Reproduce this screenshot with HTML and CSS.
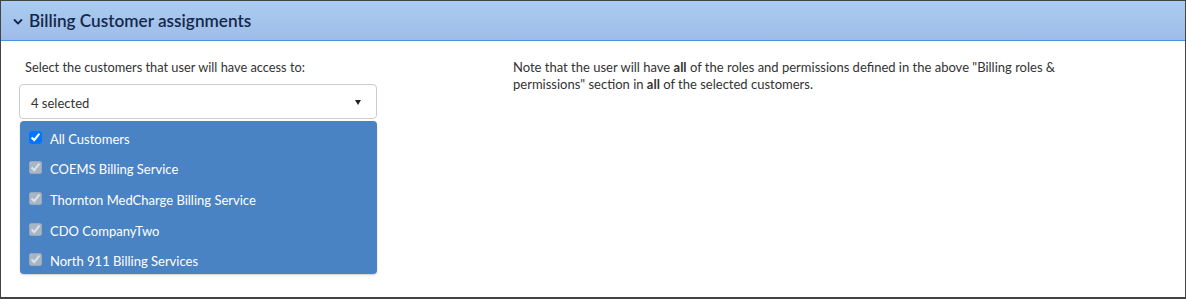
FILE: index.html
```html
<!DOCTYPE html>
<html lang="en">
<head>
    <meta charset="UTF-8">
    <title>Billing Customer assignments</title>
    <link rel="stylesheet" href="styles.css">
</head>
<body>
    <section class="panel">
        <header class="panel-heading">
            <svg class="chevron" width="10" height="8" viewBox="0 0 10 8">
                <path d="M1.5 2 L5 5.5 L8.5 2" fill="none" stroke="currentColor" stroke-width="1.8" stroke-linecap="round" stroke-linejoin="round"/>
            </svg>
            <h2 class="panel-title">Billing Customer assignments</h2>
        </header>

        <div class="panel-body">
            <div class="customer-col">
                <label class="field-label">Select the customers that user will have access to:</label>
                <div class="multiselect">
                    <div class="multiselect-toggle">
                        <span>4 selected</span>
                        <span class="caret"></span>
                    </div>
                    <ul class="multiselect-menu">
                        <li><input type="checkbox" checked> All Customers</li>
                        <li><input type="checkbox" checked disabled> COEMS Billing Service</li>
                        <li><input type="checkbox" checked disabled> Thornton MedCharge Billing Service</li>
                        <li><input type="checkbox" checked disabled> CDO CompanyTwo</li>
                        <li><input type="checkbox" checked disabled> North 911 Billing Services</li>
                    </ul>
                </div>
            </div>
            <p class="note">Note that the user will have <b>all</b> of the roles and permissions defined in the above "Billing roles &amp; permissions" section in <b>all</b> of the selected customers.</p>
        </div>
    </section>
</body>
</html>
```

FILE: styles.css
```css
* {
    margin: 0;
    padding: 0;
    box-sizing: border-box;
}

body {
    font-family: 'Lato', 'Open Sans', sans-serif;
    font-size: 13px;
    color: #333;
    background: #fff;
}

.panel {
    width: 1186px;
    height: 299px;
    border: 1px solid #444;
    border-bottom-width: 2px;
}

.panel-heading {
    height: 40px;
    display: flex;
    align-items: center;
    gap: 6px;
    padding-left: 12px;
    background: linear-gradient(to bottom, #aacdf0, #9fbce8);
    border-bottom: 1px solid #4a90dc;
    color: #15284b;
}

.chevron {
    margin-top: 3px;
}

.panel-title {
    font-size: 17.2px;
    font-weight: 600;
}

.panel-body {
    display: grid;
    grid-template-columns: 358px 560px;
    column-gap: 136px;
    padding: 18px 18px 0;
}

.field-label {
    display: block;
    padding-left: 6px;
    font-size: 12.8px;
    line-height: 17px;
    margin-bottom: 8px;
}

.multiselect-toggle {
    height: 35px;
    display: flex;
    align-items: center;
    justify-content: space-between;
    padding: 2px 15px 0 11px;
    border: 1px solid #ccc;
    border-radius: 4px;
    background: #fff;
}

.caret {
    width: 0;
    height: 0;
    border-left: 3.5px solid transparent;
    border-right: 3.5px solid transparent;
    border-top: 5px solid #222;
}

.multiselect-menu {
    list-style: none;
    margin: 2px 0 0 1px;
    background: #4a83c4;
    border-radius: 4px;
    box-shadow: 0 1px 2px rgba(0, 0, 0, 0.2);
    color: #fff;
}

.multiselect-menu li {
    height: 30.6px;
    display: flex;
    align-items: center;
    padding: 5px 0 0 9px;
}

.multiselect-menu input {
    width: 13px;
    height: 13px;
    margin: -3px 8px 0 0;
}

.note {
    line-height: 17px;
}
```
